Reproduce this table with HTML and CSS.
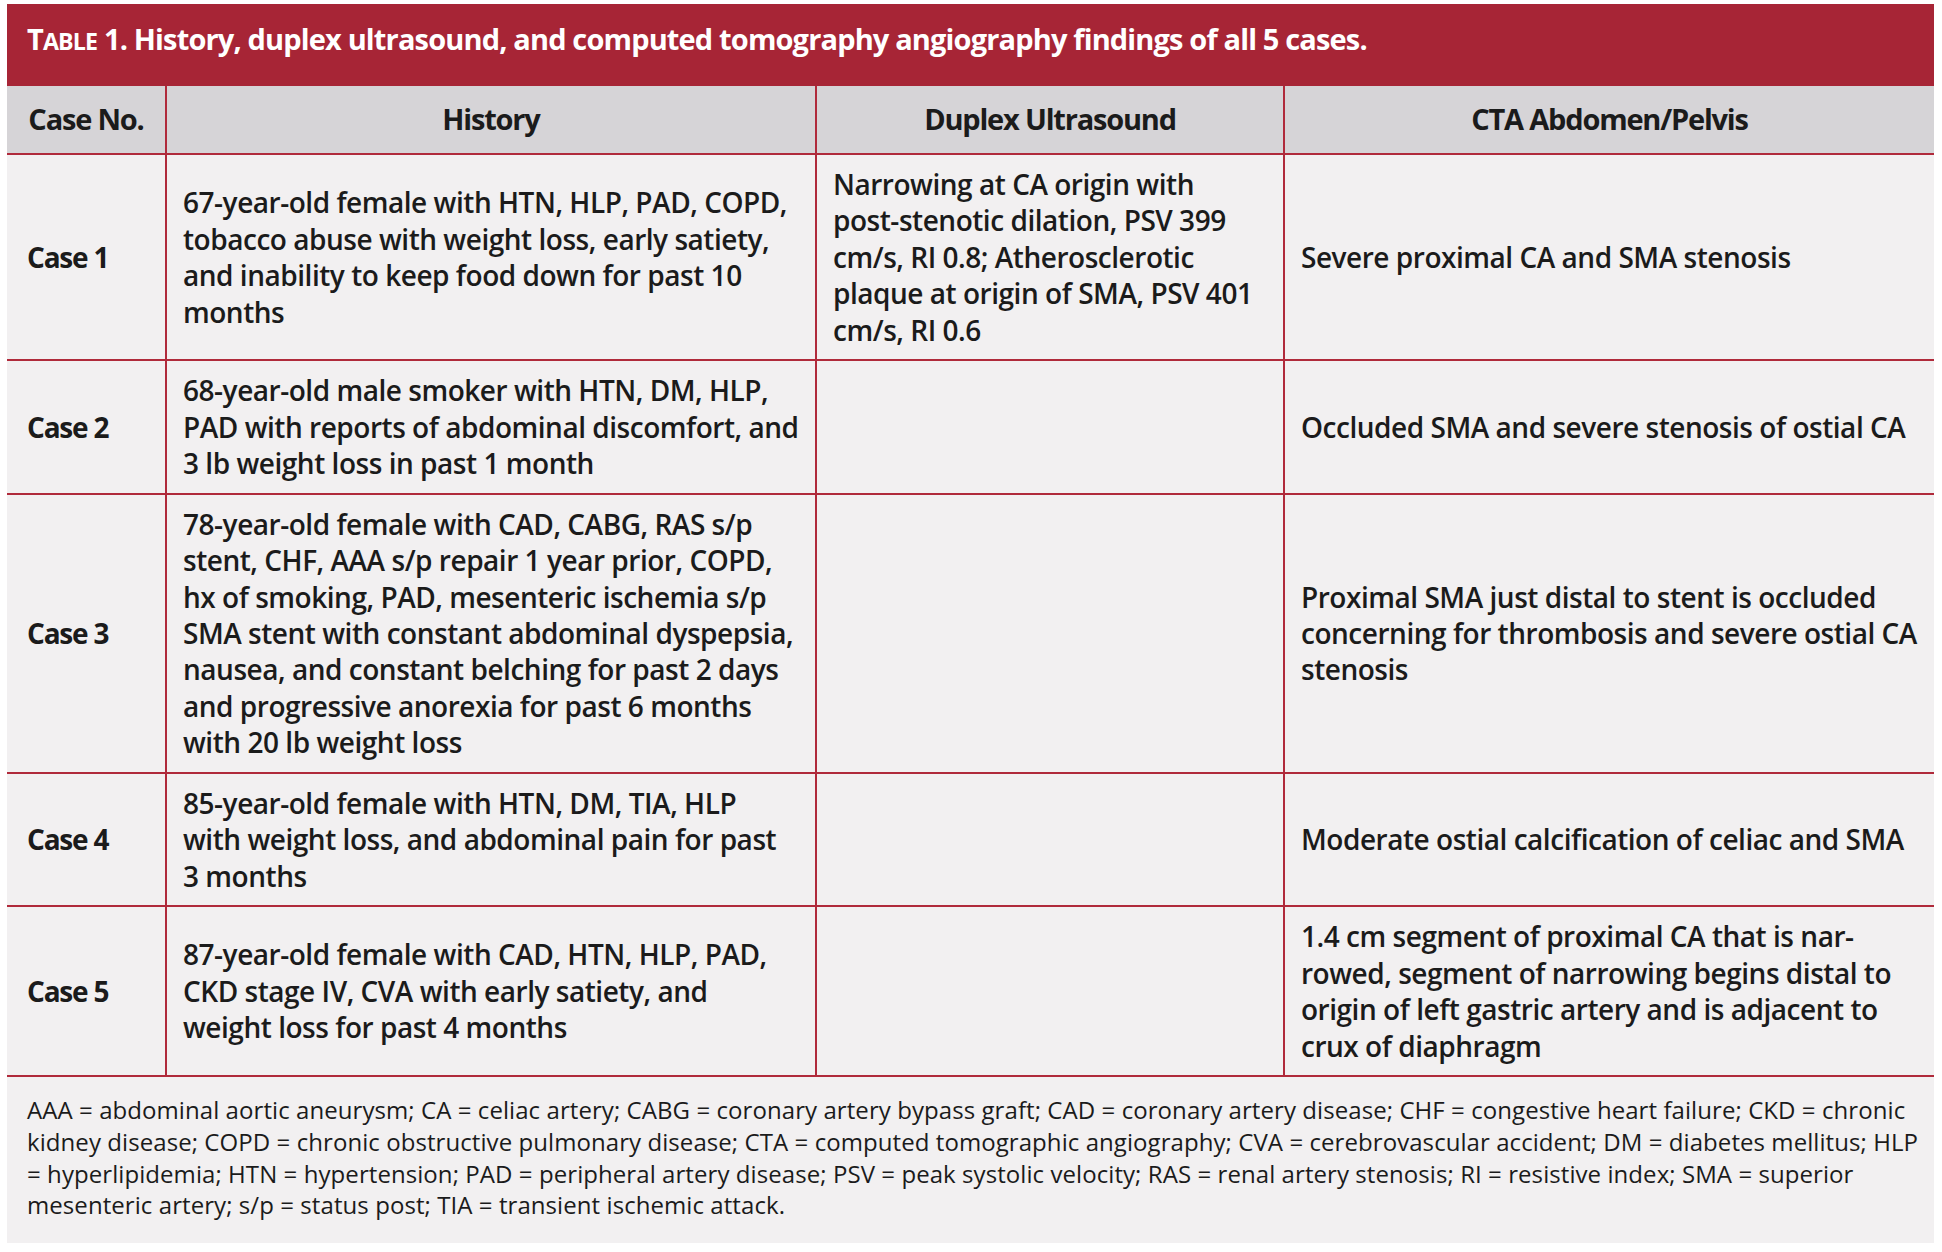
FILE: index.html
```html
<!DOCTYPE html>
<html lang="en">
<head>
<meta charset="utf-8">
<title>Table 1</title>
<link rel="stylesheet" href="styles.css">
</head>
<body>
<figure class="tbl">
  <figcaption class="tbl-title">T<span class="sc">able</span> 1. History, duplex ultrasound, and computed tomography angiography findings of all 5 cases.</figcaption>
  <div class="grid">
    <div class="th">Case No.</div>
    <div class="th">History</div>
    <div class="th">Duplex Ultrasound</div>
    <div class="th">CTA Abdomen/Pelvis</div>

    <div class="td case">Case 1</div>
    <div class="td">67-year-old female with HTN, HLP, PAD, COPD,<br>tobacco abuse with weight loss, early satiety,<br>and inability to keep food down for past 10<br>months</div>
    <div class="td">Narrowing at CA origin with<br>post-stenotic dilation, PSV 399<br>cm/s, RI 0.8; Atherosclerotic<br>plaque at origin of SMA, PSV 401<br>cm/s, RI 0.6</div>
    <div class="td">Severe proximal CA and SMA stenosis</div>

    <div class="td case">Case 2</div>
    <div class="td">68-year-old male smoker with HTN, DM, HLP,<br>PAD with reports of abdominal discomfort, and<br>3 lb weight loss in past 1 month</div>
    <div class="td"></div>
    <div class="td">Occluded SMA and severe stenosis of ostial CA</div>

    <div class="td case">Case 3</div>
    <div class="td">78-year-old female with CAD, CABG, RAS s/p<br>stent, CHF, AAA s/p repair 1 year prior, COPD,<br>hx of smoking, PAD, mesenteric ischemia s/p<br>SMA stent with constant abdominal dyspepsia,<br>nausea, and constant belching for past 2 days<br>and progressive anorexia for past 6 months<br>with 20 lb weight loss</div>
    <div class="td"></div>
    <div class="td">Proximal SMA just distal to stent is occluded<br>concerning for thrombosis and severe ostial CA<br>stenosis</div>

    <div class="td case">Case 4</div>
    <div class="td">85-year-old female with HTN, DM, TIA, HLP<br>with weight loss, and abdominal pain for past<br>3 months</div>
    <div class="td"></div>
    <div class="td">Moderate ostial calcification of celiac and SMA</div>

    <div class="td case">Case 5</div>
    <div class="td">87-year-old female with CAD, HTN, HLP, PAD,<br>CKD stage IV, CVA with early satiety, and<br>weight loss for past 4 months</div>
    <div class="td"></div>
    <div class="td">1.4 cm segment of proximal CA that is nar-<br>rowed, segment of narrowing begins distal to<br>origin of left gastric artery and is adjacent to<br>crux of diaphragm</div>
  </div>
  <p class="notes">AAA = abdominal aortic aneurysm; CA = celiac artery; CABG = coronary artery bypass graft; CAD = coronary artery disease; CHF = congestive heart failure; CKD = chronic<br>kidney disease; COPD = chronic obstructive pulmonary disease; CTA = computed tomographic angiography; CVA = cerebrovascular accident; DM = diabetes mellitus; HLP<br>= hyperlipidemia; HTN = hypertension; PAD = peripheral artery disease; PSV = peak systolic velocity; RAS = renal artery stenosis; RI = resistive index; SMA = superior<br>mesenteric artery; s/p = status post; TIA = transient ischemic attack.</p>
</figure>
</body>
</html>
```
FILE: styles.css
```css
html, body {
  margin: 0;
  padding: 0;
  background: #ffffff;
}

body {
  padding: 4px 8px 0 7px;
  font-family: "Open Sans", "Noto Sans", sans-serif;
  color: #1b1b1b;
}

.tbl {
  margin: 0;
  width: 1927px;
}

.tbl-title {
  height: 82px;
  box-sizing: border-box;
  padding: 17px 20px 0 20px;
  background: #a72536;
  color: #ffffff;
  font-size: 29px;
  font-weight: 700;
  letter-spacing: -0.85px;
  line-height: 36px;
  white-space: nowrap;
}

.sc {
  text-transform: uppercase;
  font-size: 0.8em;
}

.grid {
  display: grid;
  grid-template-columns: 158px 648px 466px 649px;
  column-gap: 2px;
  row-gap: 2px;
  background: #b02a3b;
  border-bottom: 2px solid #b02a3b;
}

.th {
  height: 67px;
  box-sizing: border-box;
  padding-bottom: 2px;
  display: flex;
  align-items: center;
  justify-content: center;
  background: #d6d4d7;
  font-size: 29px;
  font-weight: 700;
  letter-spacing: -1.2px;
  line-height: 36px;
  white-space: nowrap;
}

.td {
  display: flex;
  align-items: center;
  padding: 11px 4px 11px 16px;
  background: #f2f0f1;
  font-size: 28px;
  font-weight: 600;
  letter-spacing: -0.47px;
  line-height: 36.45px;
  white-space: nowrap;
}

.td.case {
  padding-left: 20px;
  font-weight: 700;
  letter-spacing: -1.2px;
}

.notes {
  margin: 0;
  padding: 17px 20px 22px 20px;
  background: #f2f0f1;
  font-size: 24px;
  font-weight: 400;
  letter-spacing: 0.07px;
  line-height: 31.8px;
  white-space: nowrap;
}
```
